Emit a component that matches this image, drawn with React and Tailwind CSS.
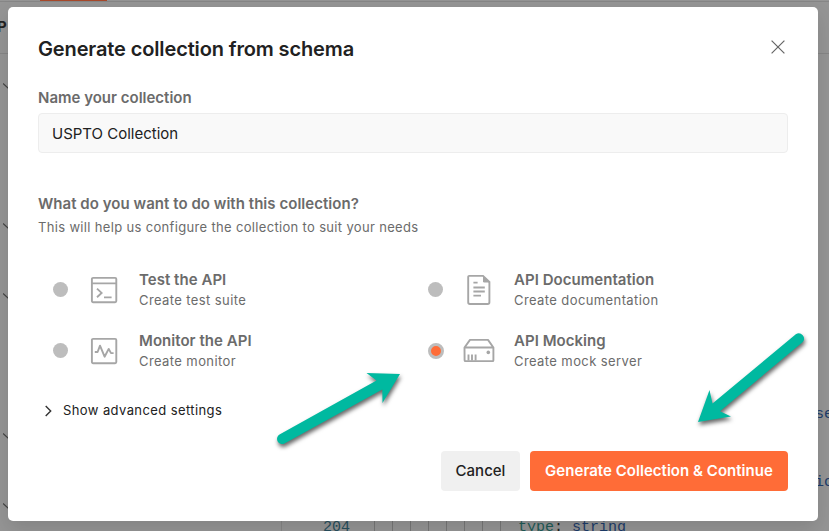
import React from "react";

const sectionToggles = [
  { id: "a", gap: "h-[140px]" },
  { id: "b", gap: "h-[70px]" },
  { id: "c", gap: "h-[140px]" },
  { id: "d", gap: "h-[70px]" },
  { id: "e", gap: "h-[70px]" },
];

function Backdrop() {
  return (
    <div className="flex h-full w-full flex-col bg-[#959595]">
      <div className="flex h-[2px] shrink-0 border-b border-[#868686] pl-10">
        <div className="h-[1px] w-[67px] bg-[#a8482a]" />
      </div>
      <div className="flex h-[52px] shrink-0 items-center border-b border-[#868686]">
        <span className="-ml-[3px] text-[15px] font-bold text-[#222]">P</span>
      </div>
      <div className="flex min-h-0 flex-1">
        <div className="flex w-[281px] shrink-0 flex-col overflow-hidden pt-[29px]">
          {sectionToggles.map((s) => (
            <div key={s.id} className={`${s.gap} shrink-0 pl-[3px]`}>
              <svg width="12" height="7" viewBox="0 0 12 7" fill="none" stroke="#444" strokeWidth="1.2">
                <path d="M0 0.5 6 6 12 0.5" />
              </svg>
            </div>
          ))}
        </div>
        <div className="flex flex-1 flex-col justify-end overflow-hidden border-l border-[#868686] font-['Liberation_Mono',monospace] text-[15px] leading-[22px] whitespace-pre">
          <div className="pl-[533px] text-[#1c3c6a]">se</div>
          <div className="h-[46px] shrink-0" />
          <div className="pl-[533px] text-[#1c3c6a]">ic</div>
          <div className="h-[23px] shrink-0" />
          <div className="-mb-[8px] flex h-[22px] shrink-0">
            <span className="w-[92px] pl-[41px] text-[#274f5e]">204</span>
            {[0, 1, 2, 3, 4, 5, 6, 7].map((n) => (
              <span key={n} className="w-[18px] shrink-0 border-l border-[#777]" />
            ))}
            <span className="text-[#1f5b57]">type</span>
            <span className="text-[#222]">: </span>
            <span className="text-[#1c3c6a]">string</span>
          </div>
        </div>
      </div>
    </div>
  );
}

function TestIcon() {
  return (
    <svg width="28" height="28" viewBox="0 0 28 28" fill="none" stroke="#a6a6a6" strokeWidth="1.9">
      <rect x="1.9" y="1.9" width="24.4" height="24.4" rx="1.2" />
      <path d="M2 7.4h24.4M7 12.6l4.6 4.3L7 21.2M14 21.4h7.6" />
    </svg>
  );
}

function MonitorIcon() {
  return (
    <svg width="28" height="28" viewBox="0 0 28 28" fill="none" stroke="#a6a6a6" strokeWidth="1.9">
      <rect x="1.9" y="1.9" width="24.4" height="24.4" rx="1.2" />
      <path d="M4.8 15h2.8L10 8.7l4.6 11 4.1-7.8 2.3 4.2h2.6" strokeLinejoin="round" />
    </svg>
  );
}

function DocIcon() {
  return (
    <svg width="24" height="32" viewBox="0 0 24 32" fill="none" stroke="#a6a6a6" strokeWidth="1.9">
      <path d="M2.2 1.9H16L22.4 8v20.3a1.7 1.7 0 0 1-1.7 1.7H2.9a1.7 1.7 0 0 1-1.7-1.7V2.9a1 1 0 0 1 1-1z" />
      <path d="M16 1.5 22.8 8.5H17.2A1.2 1.2 0 0 1 16 7.3z" fill="#a6a6a6" stroke="none" />
      <path d="M6.4 8.6h4.2M6.4 13.5h11.4M6.4 17.5h11.4M6.4 21.6h7.6" />
    </svg>
  );
}

function ServerIcon() {
  return (
    <svg width="32" height="26" viewBox="0 0 32 26" fill="none" stroke="#a6a6a6" strokeWidth="1.9" strokeLinejoin="round">
      <path d="M1.5 9.5 7 1.9h18l5.4 7.6v12.7a.9.9 0 0 1-.9.9h-27a.9.9 0 0 1-.9-.9zM1.5 9.5h29" />
      <path d="M5.5 16.6v6M9 16.6v6M12.6 16.6v6" />
      <circle cx="25.3" cy="14.4" r="1.8" fill="#a6a6a6" stroke="none" />
    </svg>
  );
}

function Option({ title, text, icon, checked }) {
  return (
    <button className="flex h-[61px] items-start text-left">
      <span className="mt-[12px] flex h-4 w-[15px] shrink-0 items-center justify-center">
        {checked ? (
          <span className="mt-[2px] h-4 w-4 shrink-0 rounded-full border-[3px] border-[#bdbdbd] bg-[#ff6c37]" />
        ) : (
          <span className="h-[15px] w-[15px] rounded-full bg-[#bdbdbd]" />
        )}
      </span>
      <span className="ml-[20px] mt-[5px] flex h-8 w-8 shrink-0 items-center justify-center">{icon}</span>
      <span className="ml-[19px] block whitespace-nowrap text-[#6b6b6b]">
        <span className="mt-[1px] block text-[15px] font-semibold leading-5 tracking-[0.04px]">{title}</span>
        <span className="block text-[13px] leading-5 tracking-[0.4px]">{text}</span>
      </span>
    </button>
  );
}

function Arrows() {
  return (
    <svg
      className="pointer-events-none absolute inset-0 drop-shadow-[1px_3px_2px_rgba(0,0,0,0.6)]"
      width="829"
      height="531"
      viewBox="0 0 829 531"
      fill="#00b9a0"
    >
      <path d="M400 374 366.5 373 376.5 380.5 279.5 434.5A5.2 5.2 0 0 0 284.5 443.6L382.3 389.5 382.5 403z" />
      <path d="M698 422 731 416.5 720 411.3 802.5 342.3A5.3 5.3 0 0 0 795.8 334.2L712.5 403.5 709.5 390z" />
    </svg>
  );
}

export default function App() {
  return (
    <div className="relative h-[531px] w-[829px] overflow-hidden font-['Inter',sans-serif]">
      <Backdrop />
      <section className="absolute left-2 top-[7px] flex h-[514px] w-[810px] flex-col rounded-[5px] bg-white px-[30px] shadow-[0_8px_20px_rgba(0,0,0,0.12)]">
        <header className="flex h-[80px] shrink-0 items-start justify-between">
          <h1 className="mt-[28px] text-[20px] font-semibold leading-7 tracking-[-0.13px] text-[#212121]">Generate collection from schema</h1>
          <button className="mr-[3px] mt-[33px]" aria-label="Close">
            <svg width="14" height="14" viewBox="0 0 14 14" stroke="#666" strokeWidth="1.2">
              <path d="M.6.6 13.4 13.4M13.4.6.6 13.4" />
            </svg>
          </button>
        </header>
        <label className="block h-[26px] text-[15px] font-semibold leading-[22px] text-[#6b6b6b]">Name your collection</label>
        <div className="flex h-10 shrink-0 items-center rounded border border-[#ededed] bg-[#f9f9f9] px-[13px] pt-[2px] text-[15px] text-[#212121]">
          USPTO Collection
        </div>
        <h2 className="mt-[40px] text-[15px] font-semibold leading-[22px] tracking-[0.04px] text-[#6b6b6b]">What do you want to do with this collection?</h2>
        <p className="mt-[1px] text-[13px] leading-[22px] tracking-[0.33px] text-[#6b6b6b]">
          This will help us configure the collection to suit your needs
        </p>
        <div className="mt-[31px] grid h-[122px] shrink-0 grid-cols-[375px_375px] pl-[15px]">
          <Option title="Test the API" text="Create test suite" icon={<TestIcon />} />
          <Option title="API Documentation" text="Create documentation" icon={<DocIcon />} />
          <Option title="Monitor the API" text="Create monitor" icon={<MonitorIcon />} />
          <Option title="API Mocking" text="Create mock server" icon={<ServerIcon />} checked />
        </div>
        <button className="mt-[9px] flex h-[22px] w-fit items-center pl-[7px] text-[13px] tracking-[0.4px] text-[#212121]">
          <svg className="mr-[11px]" width="7" height="12" viewBox="0 0 7 12" fill="none" stroke="#333" strokeWidth="1.4">
            <path d="m.7 1 5 5-5 5" />
          </svg>
          Show advanced settings
        </button>
        <footer className="mt-auto mb-[30px] flex justify-end gap-[10px]">
          <button className="h-10 w-[79px] rounded bg-[#f0f0f0] text-[15px] font-[450] text-[#212121]">Cancel</button>
          <button className="h-10 w-[258px] whitespace-nowrap rounded bg-[#ff6c37] text-[15px] font-semibold tracking-[0.03px] text-white">
            Generate Collection &amp; Continue
          </button>
        </footer>
      </section>
      <Arrows />
    </div>
  );
}
